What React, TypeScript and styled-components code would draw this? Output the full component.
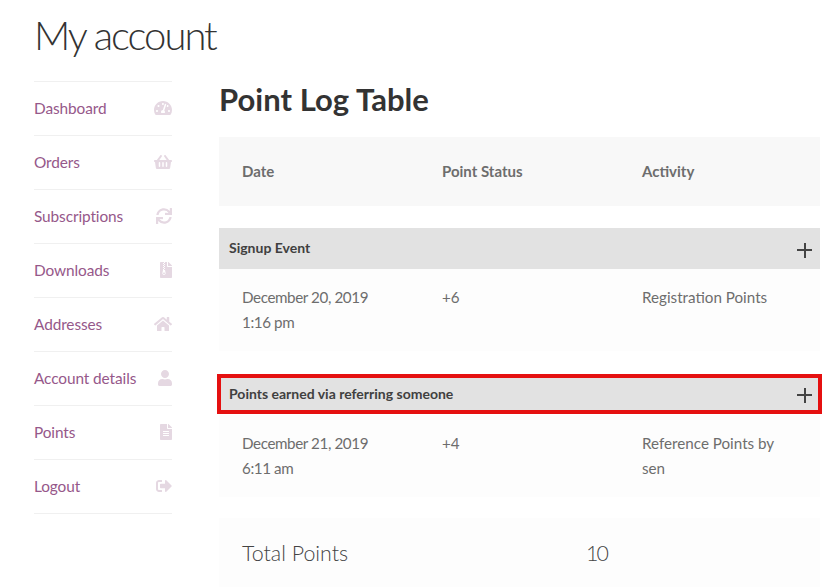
import { createGlobalStyle } from "styled-components";
import styled from "styled-components";
import type { IconType } from "react-icons";
import {
  FaTachometerAlt,
  FaShoppingBasket,
  FaSync,
  FaFileArchive,
  FaHome,
  FaUser,
  FaFileAlt,
  FaSignOutAlt,
} from "react-icons/fa";

const GlobalStyle = createGlobalStyle`
  html, body {
    margin: 0;
    padding: 0;
    background: #fff;
    height: 587px;
    overflow: hidden;
  }
  body {
    font-family: "Lato", "Liberation Sans", sans-serif;
    color: #6d6d6d;
    font-size: 16px;
  }
`;

const Page = styled.div`
  width: 836px;
  height: 587px;
  overflow: hidden;
  padding: 0 16px 0 34px;
  box-sizing: border-box;
`;

const Title = styled.h1`
  margin: 0;
  height: 81px;
  font-size: 40px;
  font-weight: 300;
  line-height: 70px;
  color: #333;
  letter-spacing: -2px;
`;

const Columns = styled.div`
  display: flex;
  gap: 47px;
`;

const Nav = styled.ul`
  list-style: none;
  margin: 0;
  padding: 0;
  width: 138px;
  flex: none;
  border-top: 1px solid #f0f0f0;
`;

const NavItem = styled.li<{ $iconWidth: number }>`
  box-sizing: border-box;
  padding-bottom: 2px;
  border-bottom: 1px solid #f0f0f0;
  height: 54px;
  display: flex;
  align-items: center;
  justify-content: space-between;
  color: #96588a;
  font-size: 15.4px;
  letter-spacing: -0.1px;

  svg {
    color: #e5d8e2;
    width: ${(p) => p.$iconWidth}px;
    height: 16px;
  }
`;

const Main = styled.main`
  flex: 1;
  min-width: 0;
`;

const Heading = styled.h2`
  margin: 0;
  height: 56px;
  font-size: 31px;
  font-weight: 700;
  line-height: 36px;
  color: #333;
  letter-spacing: 0.05px;
`;

const Row = styled.div`
  display: grid;
  grid-template-columns: 200px 200px 1fr;
  padding: 0 23px;
`;

const HeadRow = styled(Row)`
  height: 69px;
  box-sizing: border-box;
  padding-bottom: 2px;
  align-items: center;
  background: #f8f8f8;
  font-weight: 700;
  font-size: 15px;
  color: #6d6d6d;
  margin-bottom: 22px;
`;

const Group = styled.section`
  margin-bottom: 23px;

  & + & {
    margin-bottom: 21px;
  }
`;

const GroupLabel = styled.span`
  margin-bottom: 3px;
`;

const GroupBar = styled.div<{ $marked?: boolean }>`
  display: flex;
  align-items: center;
  justify-content: space-between;
  height: 41px;
  box-sizing: border-box;
  padding: 1px 8px 0 10px;
  background: #e2e2e2;
  font-size: 14px;
  font-weight: 700;
  color: #404040;
  ${(p) =>
    p.$marked &&
    `
    height: 40px;
    margin: 0 -2px 1px;
    border: 4px solid #e51010;
    padding: 0 6px 0 8px;

    span {
      margin-bottom: 1px;
    }
  `}
`;

const Plus = styled.svg`
  width: 15px;
  height: 15px;
  flex: none;
  margin-top: 3px;
`;

const EntryRow = styled(Row)`
  height: 82px;
  box-sizing: border-box;
  padding-top: 16px;
  background: #fdfdfd;
  font-size: 15.2px;
  line-height: 25px;
`;

const DateCell = styled.span`
  letter-spacing: -0.4px;
`;

const Totals = styled.div`
  display: flex;
  align-items: center;
  height: 69px;
  padding-left: 23px;
  background: #fdfdfd;
  font-size: 21.4px;
  font-weight: 300;
  color: #444;
`;

const TotalLabel = styled.span`
  width: 344px;
`;

const TotalValue = styled.span`
  letter-spacing: -2px;
`;

const navItems: [string, IconType, number][] = [
  ["Dashboard", FaTachometerAlt, 18],
  ["Orders", FaShoppingBasket, 18],
  ["Subscriptions", FaSync, 16],
  ["Downloads", FaFileArchive, 12],
  ["Addresses", FaHome, 18],
  ["Account details", FaUser, 14],
  ["Points", FaFileAlt, 12],
  ["Logout", FaSignOutAlt, 16],
];

function PlusIcon() {
  return (
    <Plus viewBox="0 0 15 15">
      <path d="M8 0v15M0 7h15" stroke="#444" strokeWidth="2" fill="none" />
    </Plus>
  );
}

export default function App() {
  return (
    <Page>
      <GlobalStyle />
      <Title>My account</Title>
      <Columns>
        <Nav>
          {navItems.map(([label, Icon, iconWidth]) => (
            <NavItem key={label} $iconWidth={iconWidth}>
              {label}
              <Icon />
            </NavItem>
          ))}
        </Nav>
        <Main>
          <Heading>Point Log Table</Heading>
          <HeadRow>
            <span>Date</span>
            <span>Point Status</span>
            <span>Activity</span>
          </HeadRow>
          <Group>
            <GroupBar>
              <GroupLabel>Signup Event</GroupLabel>
              <PlusIcon />
            </GroupBar>
            <EntryRow>
              <DateCell>
                December 20, 2019
                <br />
                1:16 pm
              </DateCell>
              <span>+6</span>
              <span>Registration Points</span>
            </EntryRow>
          </Group>
          <Group>
            <GroupBar $marked>
              <GroupLabel>Points earned via referring someone</GroupLabel>
              <PlusIcon />
            </GroupBar>
            <EntryRow>
              <DateCell>
                December 21, 2019
                <br />
                6:11 am
              </DateCell>
              <span>+4</span>
              <span>
                Reference Points by
                <br />
                sen
              </span>
            </EntryRow>
          </Group>
          <Totals>
            <TotalLabel>Total Points</TotalLabel>
            <TotalValue>10</TotalValue>
          </Totals>
        </Main>
      </Columns>
    </Page>
  );
}
